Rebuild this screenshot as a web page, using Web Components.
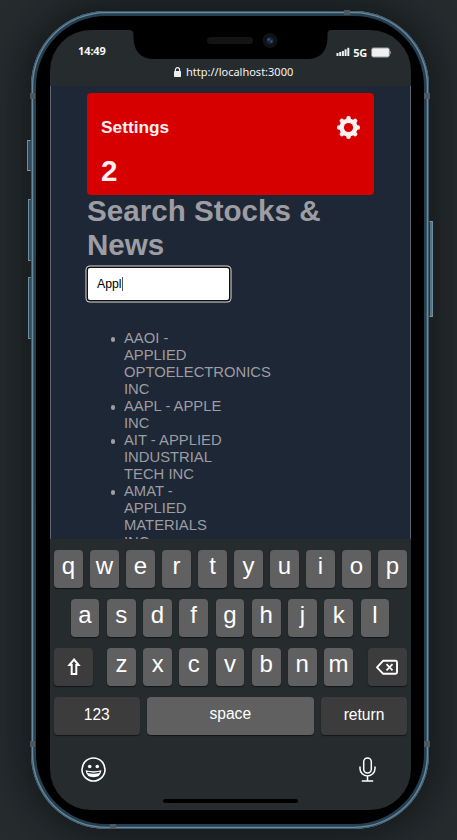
<!DOCTYPE html>
<html lang="en">
<head>
<meta charset="utf-8">
<title>Stocks</title>
<style>
html,body{margin:0;height:840px;overflow:hidden;background:#262b2e}
body{font-family:"Liberation Sans",Arial,sans-serif;color:#fff}
</style>
</head>
<body>
<phone-frame>
  <status-bar slot="status" time="14:49" network="5G"></status-bar>
  <address-bar slot="status">http://localhost:3000</address-bar>
  <stock-app>
    <settings-card label="Settings" count="2"></settings-card>
    <search-box value="Appl">Search Stocks &amp; News</search-box>
    <result-list></result-list>
  </stock-app>
  <key-board slot="keyboard"></key-board>
</phone-frame>
<script>
const define = (name, render) => customElements.define(name, class extends HTMLElement {
  connectedCallback() {
    if (this.shadowRoot) return;
    this.attachShadow({mode: 'open'}).innerHTML = render(this);
  }
});

define('phone-frame', () => `
<style>
:host{display:block;box-sizing:border-box;height:840px;padding:11px 28px 11px 31px}
.body{position:relative;box-sizing:border-box;width:398px;height:818px;border-radius:75px;padding:5px;
  background:#263f50;box-shadow:inset 0 0 0 1px #3e5b6b,inset 0 0 0 2.3px #68899c,0 0 34px 10px rgba(10,12,14,.55)}
.bezel{box-sizing:border-box;width:388px;height:808px;border-radius:70px;background:#000;padding:14px 13px 14px 14px}
.screen{display:flex;flex-direction:column;width:361px;height:780px;border-radius:41px;overflow:hidden;background:#262b2e}
.top{flex:none;height:56px}
.app{flex:none;height:453px;overflow:hidden;box-sizing:border-box;border:solid #60646f;border-width:0 1px;background:#1e2735}
.keys{flex:1}
.notch{position:absolute;left:98px;top:18px;width:202px;height:31px}
.btn{position:absolute;box-sizing:border-box;width:3px;border:1px solid #6d8c9e;background:#314b5d}
.left{border-color:#82959e #314b5d #82959e #6d8c9e}
.right{border-color:#82959e #6d8c9e #82959e #26323a;background:#587383}
.band{position:absolute;background:#4c5960}
</style>
<div class="body">
  <div class="bezel"><div class="screen">
    <div class="top"><slot name="status"></slot></div>
    <div class="app"><slot></slot></div>
    <div class="keys"><slot name="keyboard"></slot></div>
  </div></div>
  <svg class="notch" viewBox="0 0 202 31">
    <path d="M0 0V1Q4.500 1 4.500 5.500V10Q6 30 25 30H178Q197 30 198.500 10V5.500Q198.500 1 202 1V0Z" fill="#000"/>
    <rect x="78" y="8" width="46" height="7" rx="3.500" fill="#141414"/>
    <circle cx="141" cy="11.500" r="7.500" fill="#101112"/>
    <circle cx="141" cy="11.500" r="3.600" fill="#19253d"/>
    <circle cx="139.800" cy="10.500" r="1.300" fill="#3a5a8c"/><circle cx="142.500" cy="12.500" r="1.100" fill="#40609c"/>
  </svg>
  <i class="btn left" style="left:-4px;top:129px;height:31px;width:4px"></i>
  <i class="btn left" style="left:-3px;top:188px;height:62px"></i>
  <i class="btn left" style="left:-3px;top:266px;height:62px"></i>
  <i class="btn right" style="left:398px;top:210px;height:96px;width:4px"></i>
  <i class="band" style="left:-1px;top:82px;width:5px;height:6px"></i>
  <i class="band" style="left:393px;top:82px;width:6px;height:6px"></i>
  <i class="band" style="left:-1px;top:730px;width:5px;height:6px"></i>
  <i class="band" style="left:393px;top:730px;width:6px;height:6px"></i>
  <i class="band" style="left:313px;top:-1px;width:6px;height:5px"></i>
  <i class="band" style="left:79px;top:813px;width:6px;height:5px"></i>
</div>`);

define('status-bar', el => `
<style>
:host{display:flex;box-sizing:border-box;height:34px;padding:13px 20px 0 28px;justify-content:space-between;
 font:bold 11px/15px "Noto Sans","Open Sans",sans-serif;color:#f5f6f6}
.time{letter-spacing:-.1px}
.right{display:flex;align-items:center;height:18px}
.right span{margin:0 4px 0 3px;letter-spacing:-.2px;line-height:17px}
svg{display:block}
</style>
<span class="time">${el.getAttribute('time')}</span>
<div class="right">
<svg width="14" height="10" viewBox="0 0 14 10" fill="#f0f0f0"><rect x=".5" y="6" width="2" height="3"/><rect x="3.200" y="5" width="2" height="4"/><rect x="5.900" y="4" width="2" height="5"/><rect x="8.600" y="2.300" width="2" height="6.700"/><rect x="11.300" y=".8" width="2" height="8.200"/></svg>
<span>${el.getAttribute('network')}</span>
<svg style="margin-top:1px" width="20" height="11" viewBox="0 0 20 11"><rect x=".6" y=".9" width="17.800" height="9.200" rx="1.800" fill="#f0f0f0" stroke="#8b8d8f"/><path d="M19.300 4v3" stroke="#999"/></svg>
</div>`);

define('address-bar', () => `
<style>
:host{display:flex;height:17px;align-items:center;padding-left:124px;font:11px/17px "Noto Sans","Open Sans",sans-serif;color:#f3f4f4;white-space:nowrap}
svg{flex:none;margin:-2px 5px 0 0}
span{margin-top:-2px}
</style>
<svg width="7" height="10" viewBox="0 0 7 10"><rect y="4" width="7" height="6" rx=".7" fill="#eee"/><path d="M1.400 4.500V2.800a2.100 2.100 0 0 1 4.200 0v1.700" fill="none" stroke="#eee" stroke-width="1.200"/></svg>
<span><slot></slot></span>`);

define('stock-app', () => `
<style>:host{display:flow-root;padding:7px 36px 0 36px;color:#9d9da3}</style><slot></slot>`);

define('settings-card', el => {
  const cogs = Array.from({length: 8}, (_, i) => `<rect x="9.300" y="0" width="4.400" height="5" rx="1.900" transform="rotate(${i * 45} 11.500 11.500)"/>`).join('');
  return `
<style>
:host{display:block;box-sizing:border-box;width:287px;height:102px;border-radius:4px;background:#d60000;color:#fff1f1;padding:22px 14px 0;font-weight:bold}
.row{display:flex;justify-content:space-between;align-items:center;height:24px;font-size:17.300px}
.row svg{margin-top:1px}
.count{font-size:29.600px;line-height:34px;margin-top:15px}
</style>
<div class="row"><span>${el.getAttribute('label')}</span>
<svg width="23" height="23" viewBox="0 0 23 23" fill="#fff1f1">${cogs}<circle cx="11.500" cy="11.500" r="9.100"/><circle cx="11.500" cy="11.500" r="4.600" fill="#d60000"/></svg></div>
<div class="count">${el.getAttribute('count')}</div>`;
});

define('search-box', el => `
<style>
:host{display:block}
h1{margin:-1px 0 0;font-size:29.600px;line-height:34px;width:260px}
.field{box-sizing:border-box;width:141px;height:32px;margin:6px 0 0 1.400px;padding:0 0 1px 8.600px;border-radius:2px;background:#fff;color:#000;
 box-shadow:0 0 0 1.500px #101010,0 0 0 2.500px #ddd;font-size:12.300px;display:flex;align-items:center}
.caret{width:1px;height:14px;background:#555}
</style>
<h1><slot></slot></h1><div class="field"><span>${el.getAttribute('value')}</span><i class="caret"></i></div>`);

define('result-list', () => `
<style>
:host{display:block}
ul{margin:30px 0 0;padding:0 0 0 37px;width:105px;font-size:14.800px;line-height:17px;list-style:none}
li{position:relative}
li::before{content:"";position:absolute;left:-13.500px;top:7px;width:4.600px;height:4.600px;border-radius:50%;background:currentColor}
</style>
<ul><li>AAOI - APPLIED OPTOELECTRONICS INC</li><li>AAPL - APPLE INC</li><li>AIT - APPLIED INDUSTRIAL TECH INC</li><li>AMAT - APPLIED MATERIALS INC</li></ul>`);

define('key-cap', () => `
<style>
:host{display:flex;box-sizing:border-box;width:28.800px;height:38px;padding-bottom:6px;align-items:center;justify-content:center;border-radius:4px;
 background:#606060;box-shadow:0 1px 1px #131618;font-size:24px;line-height:30px;color:#fff}
:host([dark]){background:#3c3c3c}
:host([text]){font-size:15.600px;padding-bottom:3px}
:host([icon]){padding-bottom:0}
</style><slot></slot>`);

define('key-board', () => {
  const keys = s => [...s].map(c => `<key-cap>${c}</key-cap>`).join('');
  return `
<style>
:host{display:block;height:271px;box-sizing:border-box;padding:11px 4px 0 4px}
.row{display:flex;justify-content:space-between;height:38px;margin-bottom:11px}
.mid{padding:0 17.500px 0 16.500px}
.group{display:flex;gap:7.350px;margin-right:1px}
.wide{width:39px}
.foot{display:flex;justify-content:space-between;padding:11px 31.500px 0 27px}
.home{width:135px;height:4px;border-radius:2px;background:#000;margin:17px 0 0 109px}
svg{display:block}
</style>
<div class="row">${keys('qwertyuiop')}</div>
<div class="row mid">${keys('asdfghjkl')}</div>
<div class="row"><key-cap dark icon class="wide"><svg width="14" height="20" viewBox="0 0 14 20"><path d="M7 2.500 11.600 8H9.300V17H4.700V8H2.400Z" fill="none" stroke="#fff" stroke-width="2"/></svg></key-cap>
<div class="group">${keys('zxcvbnm')}</div>
<key-cap dark icon class="wide"><svg width="24" height="17" viewBox="0 0 24 17" fill="none" stroke="#fff"><path d="M8 1.800H20.500Q22 1.800 22 3.300V13.200Q22 14.700 20.500 14.700H8L2 8.300Z" stroke-width="1.900" stroke-linejoin="round"/><path d="M11.500 5.200l6 6.200M17.500 5.200l-6 6.200" stroke-width="1.700"/></svg></key-cap></div>
<div class="row"><key-cap dark text style="width:85.500px">123</key-cap><key-cap text style="width:166.500px;padding-bottom:4px">space</key-cap><key-cap dark text style="width:86px">return</key-cap></div>
<div class="foot">
<svg width="25" height="25" viewBox="0 0 25 25"><circle cx="12.500" cy="12.500" r="11.500" fill="none" stroke="#fff" stroke-width="1.600"/><circle cx="8.700" cy="9.500" r="1.800" fill="#fff"/><circle cx="16.300" cy="9.500" r="1.800" fill="#fff"/><path d="M4.600 13.300Q12.500 15 20.400 13.300Q19.800 20.300 12.500 20.300T4.600 13.300Z" fill="#fff"/><path d="M6.500 15.400Q12.500 17 18.500 15.400" fill="none" stroke="#262b2e" stroke-width="1.100"/></svg>
<svg width="17" height="25" viewBox="0 0 17 25" fill="none" stroke="#fff" stroke-width="1.500"><rect x="4.700" y="1" width="7.600" height="15" rx="3.800"/><path d="M1 9.500V11.500a7.500 7.500 0 0 0 15 0V9.500M8.500 19v4.800M2.800 24H14.200"/></svg>
</div>
<div class="home"></div>`;
});
</script>
</body>
</html>
